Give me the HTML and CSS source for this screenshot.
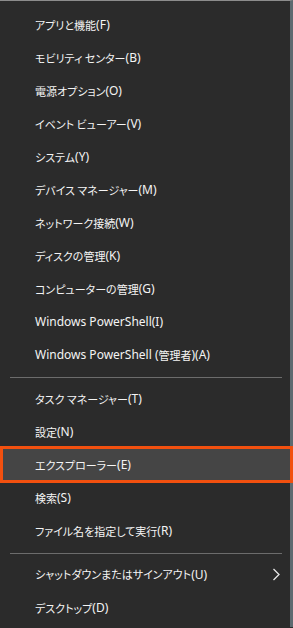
FILE: index.html
```html
<!DOCTYPE html>
<html lang="ja">
  <head>
    <meta charset="utf-8">
    <title>クイックリンク メニュー</title>
    <link rel="stylesheet" href="styles.css">
  </head>
  <body>
    <div class="menu">
      <div class="item"><span class="ja">アプリと機能</span>(F)</div>
      <div class="item"><span class="ja">モビリティ センター</span>(B)</div>
      <div class="item"><span class="ja">電源オプション</span>(O)</div>
      <div class="item"><span class="ja">イベント ビューアー</span>(V)</div>
      <div class="item"><span class="ja">システム</span>(Y)</div>
      <div class="item"><span class="ja">デバイス マネージャー</span>(M)</div>
      <div class="item"><span class="ja">ネットワーク接続</span>(W)</div>
      <div class="item"><span class="ja">ディスクの管理</span>(K)</div>
      <div class="item"><span class="ja">コンピューターの管理</span>(G)</div>
      <div class="item">Windows PowerShell(I)</div>
      <div class="item">Windows PowerShell (<span class="ja">管理者</span>)(A)</div>
      <div class="sep sep-first"></div>
      <div class="item"><span class="ja">タスク マネージャー</span>(T)</div>
      <div class="item"><span class="ja">設定</span>(N)</div>
      <div class="item active"><span class="ja">エクスプローラー</span>(E)</div>
      <div class="item"><span class="ja">検索</span>(S)</div>
      <div class="item"><span class="ja">ファイル名を指定して実行</span>(R)</div>
      <div class="sep"></div>
      <div class="item has-sub">
        <span><span class="ja">シャットダウンまたはサインアウト</span>(U)</span>
        <svg class="chevron" width="9" height="13" viewBox="0 0 9 13">
          <path d="M1.5 1 L7 6.5 L1.5 12" fill="none" stroke="#e8e8e8" stroke-width="1.3"/>
        </svg>
      </div>
      <div class="item"><span class="ja">デスクトップ</span>(D)</div>
    </div>
  </body>
</html>
```

FILE: styles.css
```css
html, body {
  margin: 0;
  padding: 0;
  background-color: #2b2b2b;
}
body {
  width: 293px;
  height: 628px;
  overflow: hidden;
  font-family: "Noto Sans", "Noto Sans CJK JP", sans-serif;
  font-size: 12px;
  color: #f4f4f4;
}
.menu {
  width: 293px;
  height: 627px;
  border-top: 1px solid #8c8c8c;
  border-right: 3px solid #5d6a70;
  padding-top: 7px;
  box-sizing: border-box;
}
.item {
  height: 33px;
  display: flex;
  align-items: center;
  padding-left: 35px;
  white-space: nowrap;
}
.ja {
  font-family: "Noto Sans CJK JP", sans-serif;
  font-size: 11px;
  font-feature-settings: "palt";
}
.item.active {
  height: 37px;
  margin: -2px -3px -2px 0;
  padding-left: 32px;
  border: 3px solid #f2500f;
  box-sizing: border-box;
  background-color: #454545;
}
.has-sub {
  justify-content: space-between;
  padding-right: 9px;
}
.sep {
  height: 1px;
  margin: 6px 8px 4px 10px;
  background-color: #6c6c6c;
}
```
